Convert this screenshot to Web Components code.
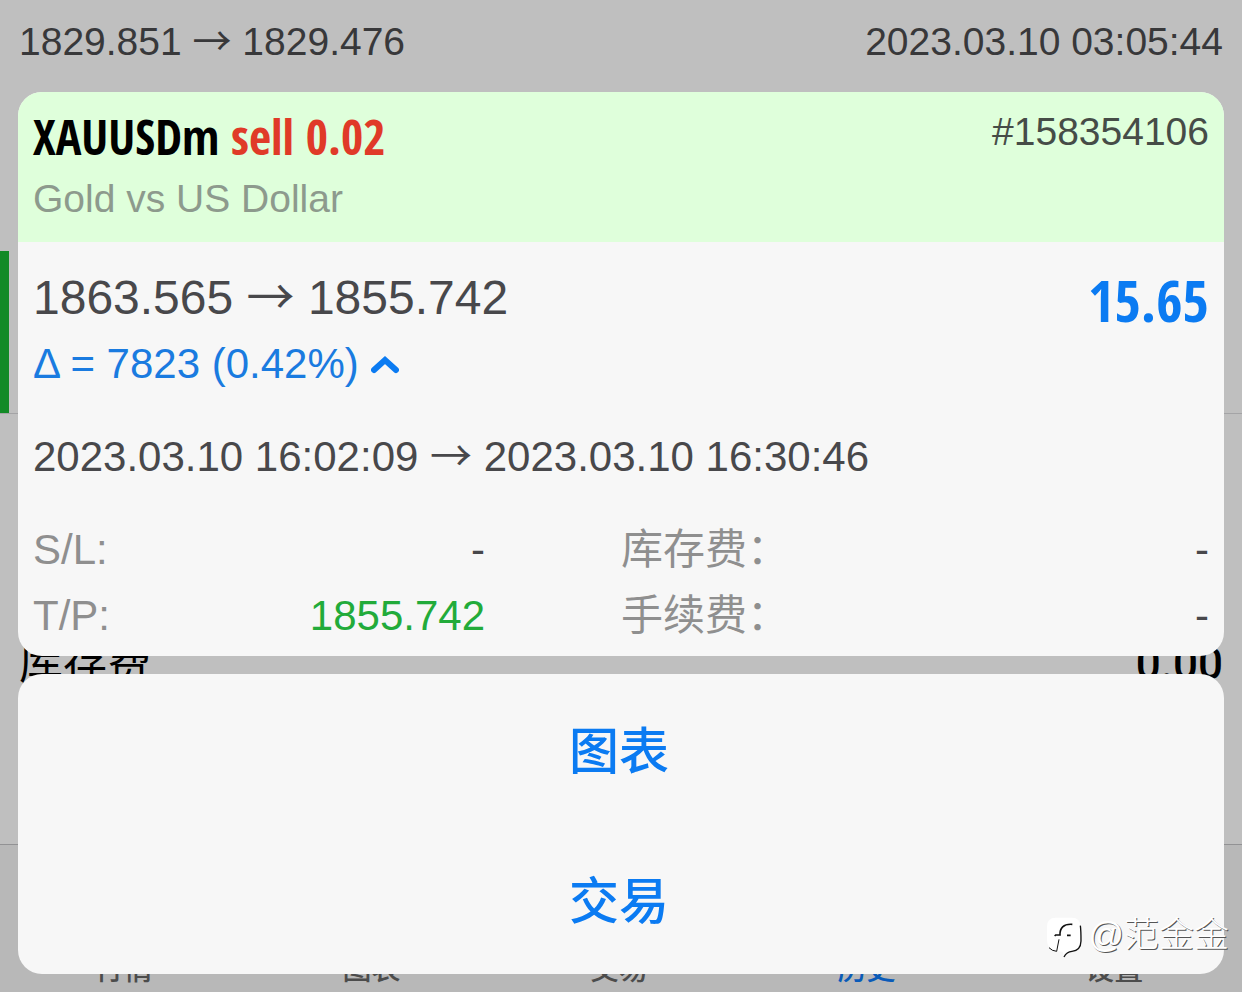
<!DOCTYPE html>
<html lang="zh-CN">
<head>
<meta charset="utf-8">
<meta name="viewport" content="width=device-width, initial-scale=1">
<title>XAUUSDm</title>
<style>
  body {
    margin: 0;
    background: #bfbfbf;
    font-family: "Liberation Sans", "Noto Sans CJK SC", sans-serif;
    color: #48484b;
  }
</style>
</head>
<body>
<trade-app></trade-app>

<script>
const define = (name, html) => {
  const template = document.createElement('template');
  template.innerHTML = html;
  customElements.define(name, class extends HTMLElement {
    constructor() {
      super();
      this.attachShadow({ mode: 'open' }).append(template.content.cloneNode(true));
    }
  });
};

/* Thin open arrow between two values */
define('range-arrow', `
  <style>
    :host { display: inline; font-family: "Noto Sans CJK SC", sans-serif; font-weight: 400; line-height: 0; }
  </style>→`);

/* History list under the overlay */
define('history-page', `
  <style>
    :host { display: flex; flex-direction: column; min-height: 100%; background: #bfbfbf; }
    .deal { display: flex; justify-content: space-between; box-sizing: border-box; min-height: 251px; padding: 18px 19px 0; font-size: 39px; line-height: 48px; color: #38383a; }
    .active { min-height: 162px; border-left: 9px solid #128a26; }
    .summary { flex: 1; box-sizing: border-box; padding: 222px 19px 0; border-top: 1px solid #a4a4a6; border-bottom: 1px solid #929294; }
    .row { display: flex; justify-content: space-between; font: 500 44px/56px Roboto, sans-serif; color: #000; }
    .row span:first-child { font-family: "Noto Sans CJK SC", sans-serif; font-weight: 400; line-height: 48px; }
  </style>
  <div class="deal"><span>1829.851 <range-arrow></range-arrow> 1829.476</span><time>2023.03.10 03:05:44</time></div>
  <div class="active"></div>
  <div class="summary"><div class="row"><span>库存费</span><span>0.00</span></div></div>
  <slot></slot>
`);

define('tab-bar', `
  <style>
    :host { display: block; background: #b8b8b8; }
    nav { display: grid; grid-template-columns: repeat(5, 1fr); align-items: end; box-sizing: border-box; min-height: 147px; padding: 0 4px 9px 0; }
    a { text-align: center; text-decoration: none; color: #4c4c4c; font: 500 29px/32px "Noto Sans CJK SC", sans-serif; }
    a[aria-current] { color: #0a5bb8; }
  </style>
  <nav>
    <a href="#quotes">行情</a><a href="#chart">图表</a><a href="#trade">交易</a><a href="#history" aria-current="page">历史</a><a href="#settings">设置</a>
  </nav>
`);

define('detail-item', `
  <style>
    :host { display: flex; justify-content: space-between; font-size: 42px; line-height: 56px; }
    .label { color: #8f8f8f; }
  </style>
  <span class="label"><slot name="label"></slot></span><span><slot></slot></span>
`);

define('deal-card', `
  <style>
    :host { display: block; border-radius: 24px; overflow: hidden; background: #f7f7f7; }
    header { display: flex; justify-content: space-between; padding: 15px 15px 19px; background: #dfffdb; }
    h1, p { margin: 0; }
    h1, .profit { font-family: "Open Sans Condensed", "Roboto Condensed", "Open Sans", sans-serif; font-weight: 700; }
    h1 { font-size: 48px; line-height: 60px; color: #000; }
    h1 span { color: #e03a28; }
    .name { margin-top: 8px; font-size: 39px; line-height: 48px; color: #8d9a8d; }
    .ticket { font-size: 39px; line-height: 50px; color: #464c47; }
    .body { display: flex; flex-direction: column; gap: 37px; padding: 26px 15px 12px; }
    .result { display: flex; justify-content: space-between; }
    .price { font-size: 48px; line-height: 60px; }
    .times { font-size: 42px; line-height: 56px; }
    .profit { font-size: 57px; line-height: 64px; color: #0b7bf2; }
    button { display: flex; align-items: center; gap: 12px; margin: 8px 0 0; padding: 0; border: 0; background: none; font: 42px/56px "Liberation Sans", sans-serif; color: #1a7be0; }
    svg { width: 28px; height: 20px; }
    .details { display: grid; grid-template-columns: 1fr 1fr; row-gap: 10px; }
    .details :nth-child(odd) { padding-right: 136px; }
    .tp { color: #22ab3a; }
  </style>
  <header>
    <div><h1>XAUUSDm <span>sell 0.02</span></h1><p class="name">Gold vs US Dollar</p></div>
    <p class="ticket">#158354106</p>
  </header>
  <div class="body">
    <div class="result">
      <div>
        <p class="price">1863.565 <range-arrow></range-arrow> 1855.742</p>
        <button type="button" aria-expanded="true">Δ = 7823 (0.42%)<svg viewBox="0 0 28 20" aria-hidden="true"><path d="M3 16 14 6 25 16" fill="none" stroke="#0b7bf2" stroke-width="6" stroke-linecap="round"/></svg></button>
      </div>
      <p class="profit">15.65</p>
    </div>
    <p class="times">2023.03.10 16:02:09 <range-arrow></range-arrow> 2023.03.10 16:30:46</p>
    <div class="details">
      <detail-item><span slot="label">S/L:</span>-</detail-item>
      <detail-item><span slot="label">库存费：</span>-</detail-item>
      <detail-item><span slot="label">T/P:</span><span class="tp">1855.742</span></detail-item>
      <detail-item><span slot="label">手续费：</span>-</detail-item>
    </div>
  </div>
`);

define('action-list', `
  <style>
    :host { display: grid; border-radius: 24px; overflow: hidden; background: #f7f7f7; }
    button { height: 150px; padding: 0 4px 4px 0; border: 0; background: none; font: 500 50px/72px "Noto Sans CJK SC", sans-serif; color: #0b7bf2; }
  </style>
  <button type="button">图表</button>
  <button type="button">交易</button>
`);

define('author-mark', `
  <style>
    :host { display: flex; align-items: flex-start; gap: 5px; font-size: 35px; line-height: 36px; font-weight: 300; color: #fff; text-shadow: 1px 1px 0 #555; }
    svg { width: 36px; height: 41px; }
  </style>
  <svg viewBox="27 36 108 123" aria-hidden="true">
    <path d="M53 38H102Q127 38 127 65V108Q127 136 100 137Q85 138 76 152L74 140 56 138Q27 134 27 106V65Q27 38 53 38Z" fill="#fff"/>
    <path d="M50 93 53 90H66C65 70 76 56 103 58M87 91H98" fill="none" stroke="#111" stroke-width="5"/>
    <path d="M63 103 56 139Q42 138 33 128" fill="none" stroke="#111" stroke-width="3"/>
    <path d="M127 62Q129 75 129 108Q128 137 102 139Q86 140 78 156" fill="none" stroke="#111" stroke-width="4"/>
  </svg>
  <span>@范金金</span>
`);

define('trade-app', `
  <style>
    :host { display: grid; position: relative; min-height: 100vh; overflow: hidden; }
    history-page, .overlay { grid-area: 1 / 1; }
    .overlay { position: relative; display: flex; flex-direction: column; gap: 18px; padding: 92px 18px 18px; }
    author-mark { position: absolute; right: 13px; bottom: 34px; }
  </style>
  <history-page><tab-bar></tab-bar></history-page>
  <main class="overlay"><deal-card></deal-card><action-list></action-list></main>
  <author-mark></author-mark>
`);
</script>
</body>
</html>
